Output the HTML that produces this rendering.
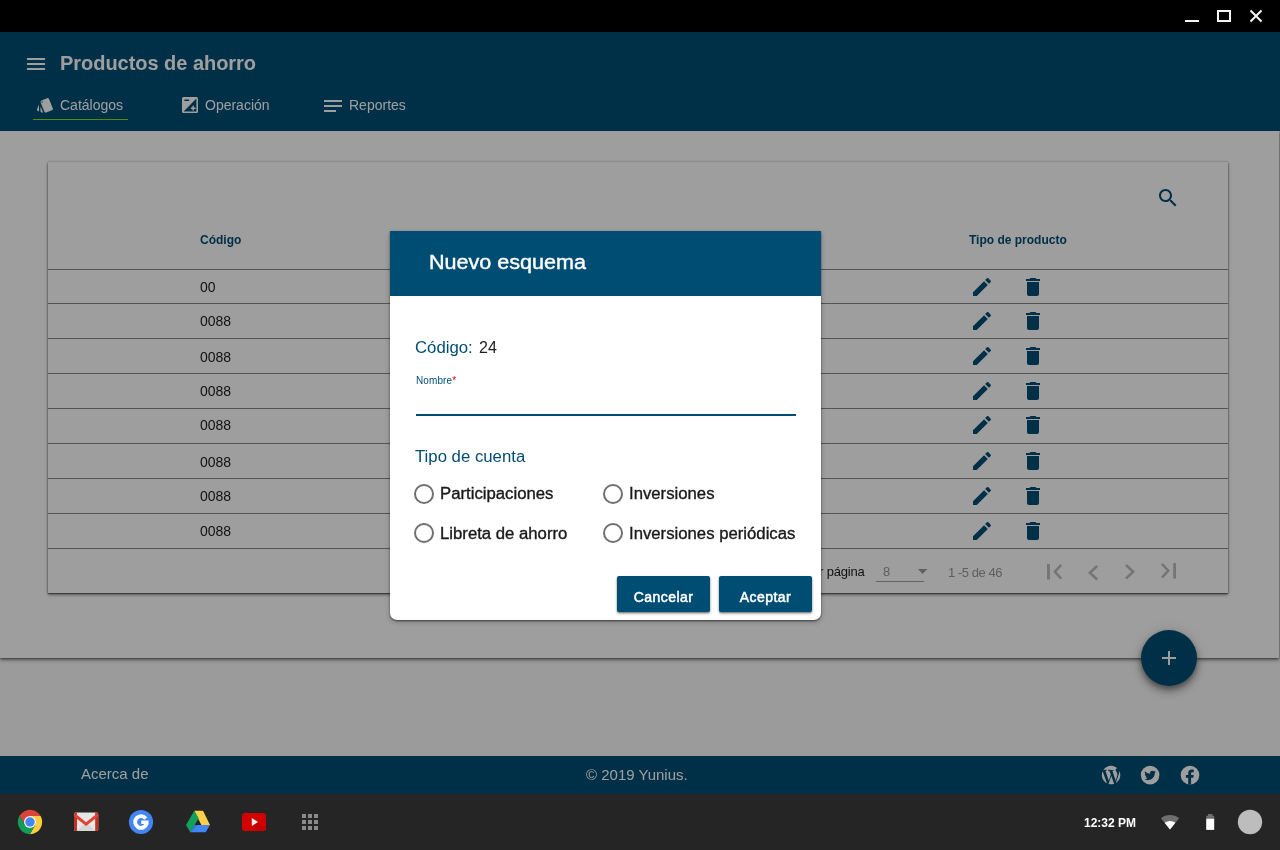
<!DOCTYPE html>
<html lang="es">
<head>
<meta charset="utf-8">
<title>Productos de ahorro</title>
<style>
*{box-sizing:border-box;margin:0;padding:0}
html,body{width:1280px;height:850px;overflow:hidden;background:#fafafa;font-family:"Liberation Sans",sans-serif;}
.abs{position:absolute}
div{will-change:transform}
#titlebar{left:0;top:0;width:1280px;height:32px;background:#000;z-index:50}
#app{left:0;top:32px;width:1280px;height:762px;background:#fafafa;overflow:hidden}
#hdr{left:0;top:0;width:1280px;height:99px;background:#004d74;color:#fff;z-index:3}
#hdr .title{left:60px;top:19px;font-size:20px;font-weight:bold;line-height:24px;white-space:nowrap;letter-spacing:-.035px}
.tab{top:64px;font-size:14px;line-height:18px;color:#fff;white-space:nowrap}
#cont{left:0;top:99px;width:1279px;height:527px;background:#fff;box-shadow:0 1px 2px rgba(0,0,0,.4),0 2px 4px rgba(0,0,0,.4)}
#card{left:48px;top:130px;width:1180px;height:431px;background:#fff;box-shadow:0 1px 1px rgba(0,0,0,.35),0 2px 3px rgba(0,0,0,.4),0 0 2px rgba(0,0,0,.35)}
.th{top:71px;font-size:12px;font-weight:bold;color:#004d74;line-height:14px;white-space:nowrap}
.row{left:0;width:1180px;height:35px;border-top:1px solid #888}
.row span{position:absolute;left:152px;top:9px;font-size:14px;line-height:16px;color:#1c1c1c}
.row svg{position:absolute;top:5px;width:24px;height:24px;fill:#004d74}
.row svg.e{left:922px}
.row svg.d{left:973px}
#pag{left:0;top:386px;width:1180px;height:45px;border-top:1px solid #888;font-size:13px;color:#1a1a1a}
#fab{left:1141px;top:598px;width:56px;height:56px;border-radius:50%;background:#004d74;box-shadow:0 3px 5px rgba(0,0,0,.3),0 6px 10px rgba(0,0,0,.25),0 1px 14px rgba(0,0,0,.15)}
#foot{left:0;top:724px;width:1280px;height:38px;background:#004d74;color:#fff;font-size:15px}
#overlay{left:0;top:32px;width:1280px;height:762px;background:rgba(0,0,0,.38);z-index:10}
#dlg{left:390px;top:231px;width:431px;height:389px;background:#fff;z-index:20;border-radius:0 0 7px 7px;box-shadow:0 1px 2px rgba(0,0,0,.5),0 2px 5px rgba(0,0,0,.25)}
#dlg .dh{left:0;top:0;width:431px;height:65px;background:#004d74}
#dlg .dt{left:39px;top:19px;font-size:20px;line-height:24px;color:#fff;white-space:nowrap;-webkit-text-stroke:.4px #fff;transform:scaleX(1.078);transform-origin:0 50%}
.lbl{font-size:16px;line-height:20px;color:#004d74;white-space:nowrap;transform:scaleX(1.047);transform-origin:0 50%}
.rad{width:20px;height:20px;border:2px solid #707070;border-radius:50%}
.rl{font-size:16px;line-height:20px;color:#1a1a1a;white-space:nowrap;-webkit-text-stroke:.35px #1a1a1a;transform:scaleX(1.045);transform-origin:0 50%}
.btn{top:345px;height:36px;background:#004d74;color:#fff;font-size:14px;line-height:43px;text-align:center;border-radius:2px;letter-spacing:.45px;-webkit-text-stroke:.5px #fff;box-shadow:0 1px 2px rgba(0,0,0,.45),0 2px 3px rgba(0,0,0,.2)}
#shelf{left:0;top:794px;width:1280px;height:56px;background:#252525;z-index:50}
</style>
</head>
<body>
<div id="titlebar" class="abs">
<svg class="abs" style="left:1180px;top:0" width="100" height="32" viewBox="0 0 100 32"><g stroke="#f4f4f4" stroke-width="2" fill="none"><path d="M5 21h14"/><rect x="38" y="11" width="12" height="10"/><path d="M70.5 10.5l11 11M81.5 10.5l-11 11"/></g></svg>
</div>

<div id="app" class="abs">
  <div id="cont" class="abs"></div>
  <div id="hdr" class="abs">
    <svg class="abs" style="left:24px;top:20px" width="24" height="24" viewBox="0 0 24 24" fill="#fff"><path d="M3 18h18v-2H3v2zm0-5h18v-2H3v2zm0-7v2h18V6H3z"/></svg>
    <div class="abs title">Productos de ahorro</div>
    <svg class="abs" style="left:35.8px;top:63.6px" width="18.3" height="18.3" viewBox="0 0 24 24" fill="#fff"><path d="M2.53 19.65l1.34.56v-9.03l-2.43 5.86c-.41 1.02.08 2.19 1.09 2.61zm19.5-3.7L17.07 3.98c-.31-.75-1.04-1.21-1.81-1.23-.26 0-.53.04-.79.15L7.1 5.95c-.75.31-1.21 1.03-1.23 1.8-.01.27.04.54.15.8l4.96 11.97c.31.76 1.05 1.22 1.83 1.23.26 0 .52-.05.77-.15l7.36-3.05c1.02-.42 1.51-1.59 1.09-2.6zM7.88 8.75c-.55 0-1-.45-1-1s.45-1 1-1 1 .45 1 1-.45 1-1 1zm-2 11c0 1.1.9 2 2 2h1.45l-3.45-8.34v6.34z"/></svg>
    <div class="abs tab" style="left:60px">Catálogos</div>
    <svg class="abs" style="left:182px;top:65px" width="16" height="16" viewBox="2 2 20 20" fill="#fff"><path d="M15 17v2h2v-2h2v-2h-2v-2h-2v2h-2v2h2zm5-15H4c-1.1 0-2 .9-2 2v16c0 1.1.9 2 2 2h16c1.1 0 2-.9 2-2V4c0-1.1-.9-2-2-2zM5 5h6v2H5V5zm15 15H4L20 4v16z"/></svg>
    <div class="abs tab" style="left:205px">Operación</div>
    <svg class="abs" style="left:321px;top:62px" width="24" height="24" viewBox="0 0 24 24" fill="#fff"><path d="M3 18h12v-2H3v2zM3 6v2h18V6H3zm0 7h18v-2H3v2z"/></svg>
    <div class="abs tab" style="left:349px">Reportes</div>
    <div class="abs" style="left:33px;top:86.7px;width:95px;height:1.3px;background:#9bdc00"></div>
  </div>

  <div id="card" class="abs">
    <svg class="abs" style="left:1108px;top:24px" width="24" height="24" viewBox="0 0 24 24" fill="#004d74"><path d="M15.5 14h-.79l-.28-.27C15.41 12.59 16 11.11 16 9.5 16 5.91 13.09 3 9.5 3S3 5.91 3 9.5 5.91 16 9.5 16c1.61 0 3.09-.59 4.23-1.57l.27.28v.79l5 4.99L20.49 19l-4.99-5zm-6 0C7.01 14 5 11.99 5 9.5S7.01 5 9.5 5 14 7.01 14 9.5 11.99 14 9.5 14z"/></svg>
    <div class="abs th" style="left:152px">Código</div>
    <div class="abs th" style="left:921px">Tipo de producto</div>
    <svg width="0" height="0" style="position:absolute"><defs>
      <path id="ie" d="M3 17.25V21h3.75L17.81 9.94l-3.75-3.75L3 17.25zM20.71 7.04c.39-.39.39-1.02 0-1.41l-2.34-2.34c-.39-.39-1.02-.39-1.41 0l-1.83 1.83 3.75 3.75 1.83-1.83z"/>
      <path id="id" d="M6 19c0 1.1.9 2 2 2h8c1.1 0 2-.9 2-2V7H6v12zM19 4h-3.500l-1-1h-5l-1 1H5v2h14V4z"/>
    </defs></svg>
    <div class="abs row" style="top:107px"><span>00</span><svg class="e" viewBox="0 0 24 24"><use href="#ie"/></svg><svg class="d" viewBox="0 0 24 24"><use href="#id"/></svg></div>
    <div class="abs row" style="top:141px"><span>0088</span><svg class="e" viewBox="0 0 24 24"><use href="#ie"/></svg><svg class="d" viewBox="0 0 24 24"><use href="#id"/></svg></div>
    <div class="abs row" style="top:176px"><span style="top:10px">0088</span><svg class="e" viewBox="0 0 24 24"><use href="#ie"/></svg><svg class="d" viewBox="0 0 24 24"><use href="#id"/></svg></div>
    <div class="abs row" style="top:211px"><span>0088</span><svg class="e" viewBox="0 0 24 24"><use href="#ie"/></svg><svg class="d" viewBox="0 0 24 24"><use href="#id"/></svg></div>
    <div class="abs row" style="top:246px"><span style="top:8px">0088</span><svg class="e" style="top:4px" viewBox="0 0 24 24"><use href="#ie"/></svg><svg class="d" style="top:4px" viewBox="0 0 24 24"><use href="#id"/></svg></div>
    <div class="abs row" style="top:281px"><span style="top:10px">0088</span><svg class="e" viewBox="0 0 24 24"><use href="#ie"/></svg><svg class="d" viewBox="0 0 24 24"><use href="#id"/></svg></div>
    <div class="abs row" style="top:316px"><span>0088</span><svg class="e" viewBox="0 0 24 24"><use href="#ie"/></svg><svg class="d" viewBox="0 0 24 24"><use href="#id"/></svg></div>
    <div class="abs row" style="top:351px"><span>0088</span><svg class="e" viewBox="0 0 24 24"><use href="#ie"/></svg><svg class="d" viewBox="0 0 24 24"><use href="#id"/></svg></div>
    <div id="pag" class="abs">
      <div class="abs" style="right:364px;top:15px;line-height:16px;white-space:nowrap;letter-spacing:-.2px">Elementos por página</div>
      <div class="abs" style="left:835px;top:14.5px;line-height:16px;color:#999">8</div>
      <div class="abs" style="left:828px;top:32px;width:48px;height:1px;background:#a0a0a0"></div>
      <svg class="abs" style="left:869.8px;top:20.400px" width="9.2" height="5" viewBox="0 0 10 5" preserveAspectRatio="none"><path d="M0 0h10L5 5z" fill="#9c9c9c"/></svg>
      <div class="abs" style="left:900px;top:15.6px;line-height:16px;color:#999;white-space:nowrap;letter-spacing:-.45px">1 -5 de 46</div>
      <svg class="abs" style="left:998.7px;top:15.400px" width="15.1" height="15.5" viewBox="6 6 12.41 12" preserveAspectRatio="none" fill="#bdbdbd"><path d="M18.41 16.59L13.82 12l4.59-4.59L17 6l-6 6 6 6zM6 6h2.4v12H6z"/></svg>
      <svg class="abs" style="left:1040px;top:16.300px" width="10.2" height="15.4" viewBox="8 6 7.41 12" preserveAspectRatio="none" fill="#bdbdbd"><path d="M15.41 7.41L14 6l-6 6 6 6 1.41-1.41L10.83 12z"/></svg>
      <svg class="abs" style="left:1076.5px;top:15.400px" width="10" height="15.5" viewBox="8.59 6 7.41 12" preserveAspectRatio="none" fill="#bdbdbd"><path d="M10 6L8.59 7.41 13.17 12l-4.58 4.59L10 18l6-6z"/></svg>
      <svg class="abs" style="left:1112.9px;top:14px" width="15.1" height="15.5" viewBox="5.59 6 12.41 12" preserveAspectRatio="none" fill="#bdbdbd"><path d="M5.59 7.41L10.180 12l-4.590 4.590L7 18l6-6-6-6zM15.6 6h2.4v12h-2.4z"/></svg>
    </div>
  </div>

  <div id="fab" class="abs"><svg class="abs" style="left:16px;top:16px" width="24" height="24" viewBox="0 0 24 24" fill="#fff"><path d="M19 13h-6v6h-2v-6H5v-2h6V5h2v6h6v2z"/></svg></div>

  <div id="foot" class="abs">
    <div class="abs" style="left:81px;top:9px;line-height:18px">Acerca de</div>
    <div class="abs" style="left:586px;top:10px;line-height:18px;white-space:nowrap">© 2019 Yunius.</div>
    <svg class="abs" style="left:1096px;top:4px" width="110" height="30" viewBox="1096 760 110 30">
      <g transform="translate(1100.800 764.800) scale(.858)"><path fill="#fff" d="M21.469 6.825c.84 1.537 1.318 3.3 1.318 5.175 0 3.979-2.156 7.456-5.363 9.325l3.295-9.527c.615-1.54.82-2.771.82-3.864 0-.405-.026-.78-.07-1.11m-7.981.105c.647-.03 1.232-.105 1.232-.105.582-.075.514-.93-.067-.899 0 0-1.755.135-2.88.135-1.064 0-2.85-.15-2.85-.15-.585-.03-.661.855-.075.885 0 0 .54.061 1.125.09l1.68 4.605-2.37 7.08L5.354 6.9c.649-.03 1.234-.1 1.234-.1.585-.075.516-.93-.065-.896 0 0-1.746.138-2.874.138-.2 0-.438-.008-.69-.015C4.911 3.15 8.235 1.215 12 1.215c2.809 0 5.365 1.072 7.286 2.833-.046-.003-.091-.009-.141-.009-1.06 0-1.812.923-1.812 1.914 0 .89.513 1.643 1.06 2.531.411.72.89 1.643.89 2.977 0 .915-.354 1.994-.821 3.479l-1.075 3.585-3.9-11.61.001.014zM12 22.784c-1.059 0-2.081-.153-3.048-.437l3.237-9.406 3.315 9.087c.024.053.05.101.078.149-1.12.393-2.325.609-3.582.609M1.211 12c0-1.564.336-3.05.935-4.39L7.29 21.709C3.694 19.96 1.212 16.271 1.211 12"/></g>
      <circle cx="1150.1" cy="775.1" r="9.3" fill="#fff"/>
      <g transform="translate(1144.3 769.6) scale(.485)"><path fill="#004d74" d="M23.953 4.57a10 10 0 01-2.825.775 4.958 4.958 0 002.163-2.723c-.951.555-2.005.959-3.127 1.184a4.920 4.920 0 00-8.384 4.482C7.690 8.095 4.067 6.130 1.640 3.162a4.822 4.822 0 00-.666 2.475c0 1.710.870 3.213 2.188 4.096a4.904 4.904 0 01-2.228-.616v.060a4.923 4.923 0 003.946 4.827 4.996 4.996 0 01-2.212.085 4.936 4.936 0 004.604 3.417 9.867 9.867 0 01-6.102 2.105c-.390 0-.779-.023-1.170-.067a13.995 13.995 0 007.557 2.209c9.053 0 13.998-7.496 13.998-13.985 0-.210 0-.420-.015-.630A9.935 9.935 0 0024 4.590z"/></g>
      <circle cx="1190" cy="775.1" r="9.3" fill="#fff"/>
      <path fill="#004d74" d="M1188.2 784.6v-6.900h-2.300v-2.600h2.300v-1.900c0-2.300 1.400-3.600 3.500-3.600.900 0 1.700.100 2.100.150v2.400h-1.400c-1.100 0-1.300.550-1.300 1.300v1.650h2.600l-.350 2.600h-2.250v6.900z"/>
    </svg>

  </div>
</div>

<div id="overlay" class="abs"></div>

<div id="dlg" class="abs">
  <div class="abs dh"></div>
  <div class="abs dt">Nuevo esquema</div>
  <div class="abs lbl" style="left:25px;top:107px">Código:</div>
  <div class="abs" style="left:89px;top:107px;font-size:16px;line-height:20px;color:#212121">24</div>
  <div class="abs" style="left:26px;top:144px;font-size:10px;line-height:12px;color:#004d74;letter-spacing:.1px">Nombre<span style="color:#e00">*</span></div>
  <div class="abs" style="left:26px;top:183px;width:380px;height:2px;background:#004d74"></div>
  <div class="abs lbl" style="left:25px;top:216px">Tipo de cuenta</div>
  <div class="abs rad" style="left:24px;top:253px"></div><div class="abs rl" style="left:50px;top:253px">Participaciones</div>
  <div class="abs rad" style="left:213px;top:253px"></div><div class="abs rl" style="left:239px;top:253px">Inversiones</div>
  <div class="abs rad" style="left:24px;top:292px"></div><div class="abs rl" style="left:50px;top:293px">Libreta de ahorro</div>
  <div class="abs rad" style="left:213px;top:292px"></div><div class="abs rl" style="left:239px;top:293px">Inversiones periódicas</div>
  <div class="abs btn" style="left:227px;width:93px">Cancelar</div>
  <div class="abs btn" style="left:329px;width:93px">Aceptar</div>
</div>

<div id="shelf" class="abs">
  <svg class="abs" style="left:0;top:0" width="340" height="56" viewBox="0 794 340 56">
    <!-- chrome -->
    <g>
      <path d="M30 816L40.620 816A12.200 12.200 0 0 0 19.494 815.803L24.804 825 30 822z" fill="#db4437"/>
      <path d="M30 816L40.620 816A12.200 12.200 0 0 1 29.886 834.197L35.196 825 30 822z" fill="#ffcd40"/>
      <path d="M35.196 825L29.886 834.197A12.200 12.200 0 0 1 19.494 815.803L24.804 825 30 822z" fill="#0f9d58"/>
      <circle cx="30" cy="822" r="6" fill="#f1f1f1"/>
      <circle cx="30" cy="822" r="4.700" fill="#4285f4"/>
    </g>
    <!-- gmail -->
    <g>
      <rect x="74" y="812.500" width="24.200" height="18.500" rx="1.500" fill="#e6e6e6"/>
      <path d="M77 831l9.100-9 9.100 9z" fill="#d6d6d6"/>
      <path d="M74 814a1.500 1.500 0 0 1 1.500-1.500H77V831h-1.500A1.500 1.500 0 0 1 74 829.500zM98.200 814a1.500 1.500 0 0 0-1.500-1.500H95.200V831h1.500a1.500 1.500 0 0 0 1.500-1.500z" fill="#c5301f"/>
      <path d="M74.600 813l11.500 9.200L97.600 813l.6 1v2.400L86.100 826 74 816.400V814z" fill="#dc4437"/>
    </g>
    <!-- google -->
    <g>
      <circle cx="141" cy="822" r="12.100" fill="#4285f4"/>
      <path d="M147.390 817.530A7.800 7.800 0 1 0 148.540 824V820.400H141.300V824H144.350A3.900 3.900 0 1 1 144.190 819.760z" fill="#fff"/>
    </g>
    <!-- drive -->
    <g>
      <path d="M194.300 810.800H203L210 825H201.400z" fill="#ffcf48"/>
      <path d="M194.300 810.800L198.650 818.300 190.300 832.200 186 825z" fill="#12a05c"/>
      <path d="M190.300 832.200L194.600 825H210L205.700 832.200z" fill="#4285f4"/>
      <path d="M190.300 832.200L194.600 825H198.500z" fill="#3a75d8"/>
    </g>
    <!-- youtube -->
    <g>
      <rect x="242" y="812.900" width="24" height="18.200" rx="3.200" fill="#d40000"/>
      <path d="M256 822l10 6v1a3.200 3.200 0 0 1-3.200 2.100H258l-6.100-5z" fill="#c40000"/>
      <path d="M251.800 818v8l6.300-4z" fill="#f4f4f4"/>
    </g>
    <!-- apps -->
    <g fill="#8a8a8a">
      <rect x="302" y="814" width="4" height="4"/><rect x="308" y="814" width="4" height="4"/><rect x="314" y="814" width="4" height="4"/>
      <rect x="302" y="820" width="4" height="4"/><rect x="308" y="820" width="4" height="4"/><rect x="314" y="820" width="4" height="4"/>
      <rect x="302" y="826" width="4" height="4"/><rect x="308" y="826" width="4" height="4"/><rect x="314" y="826" width="4" height="4"/>
    </g>
  </svg>
  <div class="abs" style="left:1084px;top:22px;font-size:12px;font-weight:bold;color:#fff;line-height:14px;white-space:nowrap">12:32 PM</div>
  <svg class="abs" style="left:1150px;top:0" width="130" height="56" viewBox="1150 794 130 56">
    <path d="M1170 829.600L1160.900 818.200A14.500 14.500 0 0 1 1179.100 818.200z" fill="#6e6e6e"/>
    <path d="M1170 829.600L1164.600 822.800A8.600 8.600 0 0 1 1175.400 822.800z" fill="#fff"/>
    <path d="M1208 814h4.400v1.700h1.800V818.600h-8V815.700h1.800z" fill="#6e6e6e"/>
    <rect x="1206.200" y="818.600" width="8" height="11.300" fill="#fff"/>
    <circle cx="1250" cy="822" r="12.200" fill="#bdbdbd"/>
  </svg>
</div>
</body>
</html>
